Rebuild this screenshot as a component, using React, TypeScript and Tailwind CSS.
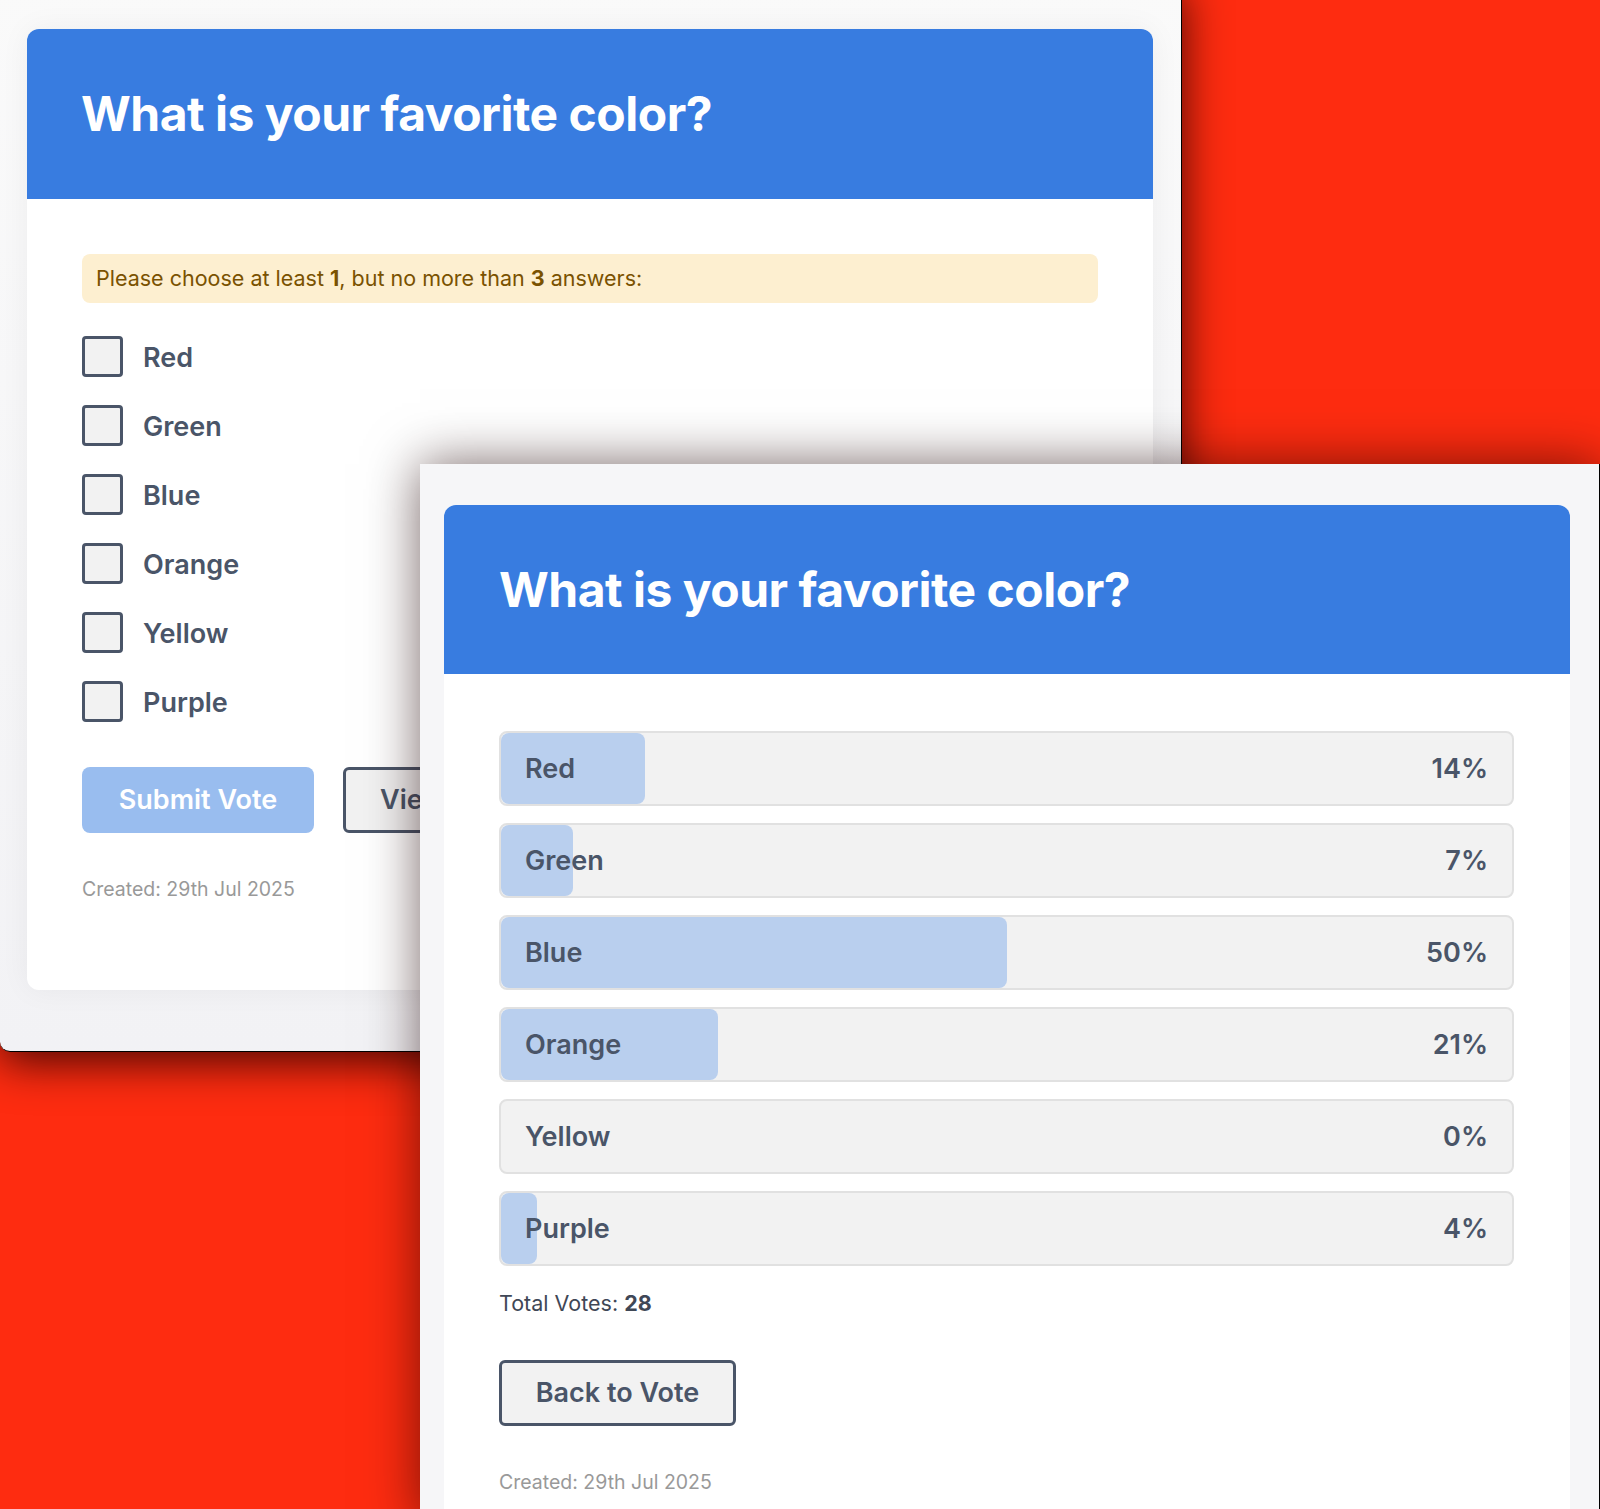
import React from "react";

const options = ["Red", "Green", "Blue", "Orange", "Yellow", "Purple"];

const results = [
  { label: "Red", votes: 4 },
  { label: "Green", votes: 2 },
  { label: "Blue", votes: 14 },
  { label: "Orange", votes: 6 },
  { label: "Yellow", votes: 0 },
  { label: "Purple", votes: 1 },
];
const total = 28;

function Header() {
  return (
    <div className="flex h-[170px] items-center bg-[#387ce0] px-[54px]">
      <h1 className="text-[48px] font-bold tracking-[-0.5px] text-white">What is your favorite color?</h1>
    </div>
  );
}

function VoteWindow() {
  return (
    <div className="absolute left-0 top-[-20px] h-[1072px] w-[1182px] rounded-bl-[10px] border-b border-r border-black bg-gradient-to-b from-[#fafafa] to-[#f2f2f5] pl-[27px] pt-[49px] shadow-[0_10px_45px_rgba(40,0,0,0.85)]">
      <div className="h-[961px] w-[1126px] overflow-hidden rounded-[12px] bg-white shadow-[0_0_30px_rgba(0,0,0,0.05)]">
        <Header />
        <div className="px-[55px] pt-[55px]">
          <div className="flex h-[49px] items-center rounded-[8px] bg-[#fdefd0] px-[14px] text-[21.5px] text-[#7a5200]">
            <span>
              Please choose at least <b className="font-bold">1</b>, but no more than <b className="font-bold">3</b> answers:
            </span>
          </div>
          <div className="mt-[33px] flex flex-col gap-[28px]">
            {options.map((o) => (
              <label key={o} className="flex h-[41px] items-center gap-[20px]">
                <span className="h-[41px] w-[41px] rounded-[4px] border-[3px] border-[#4a5568] bg-[#f2f2f2]" />
                <span className="pt-[3px] text-[27px] font-semibold text-[#4a5568]">{o}</span>
              </label>
            ))}
          </div>
          <div className="mt-[45px] flex gap-[29px]">
            <button className="h-[66px] w-[232px] rounded-[8px] bg-[#99bdef] text-[27px] font-semibold text-white">
              Submit Vote
            </button>
            <button className="h-[66px] rounded-[6px] border-[3px] border-[#4a5568] bg-[#f2f2f2] px-[34px] text-[27px] font-semibold text-[#4a5568]">
              View Results
            </button>
          </div>
          <p className="mt-[42px] text-[19.5px] text-[#999999]">Created: 29th Jul 2025</p>
        </div>
      </div>
    </div>
  );
}

function ResultsWindow() {
  return (
    <div className="absolute left-[420px] top-[464px] h-[1060px] w-[1180px] border-r border-black bg-[#f6f6f8] pl-[24px] pt-[41px] shadow-[0_0_50px_rgba(30,0,0,0.6)]">
      <div className="h-[1100px] w-[1126px] overflow-hidden rounded-[12px] bg-white">
        <div className="flex h-[169px] items-center bg-[#387ce0] px-[55px]">
          <h1 className="text-[48px] font-bold tracking-[-0.5px] text-white">What is your favorite color?</h1>
        </div>
        <div className="px-[55px] pt-[57px]">
          <div className="flex flex-col gap-[17px]">
            {results.map((r) => (
              <div
                key={r.label}
                className="relative h-[75px] w-[1015px] rounded-[8px] border-2 border-[#e1e1e1] bg-[#f2f2f2]"
              >
                {r.votes > 0 ? (
                  <div
                    className="absolute inset-y-0 left-0 rounded-[8px] bg-[#b9cfee]"
                    style={{ width: `${(r.votes / total) * 100}%` }}
                  />
                ) : null}
                <div className="relative flex h-full items-center justify-between px-[24px] pt-[2px] text-[27px] font-semibold text-[#4a5568]">
                  <span>{r.label}</span>
                  <span>{Math.round((r.votes / total) * 100)}%</span>
                </div>
              </div>
            ))}
          </div>
          <p className="mt-[21px] text-[21.5px] text-[#3f4756]">
            Total Votes: <b className="font-bold">28</b>
          </p>
          <button className="mt-[41px] h-[66px] w-[237px] rounded-[6px] border-[3px] border-[#4a5568] bg-[#f2f2f2] text-[27px] font-semibold text-[#4a5568]">
            Back to Vote
          </button>
          <p className="mt-[42px] text-[19.5px] text-[#999999]">Created: 29th Jul 2025</p>
        </div>
      </div>
    </div>
  );
}

export default function App() {
  return (
    <div className="relative h-[1509px] w-[1600px] overflow-hidden bg-[#fe2c10] font-[Inter,sans-serif]">
      <VoteWindow />
      <ResultsWindow />
    </div>
  );
}
